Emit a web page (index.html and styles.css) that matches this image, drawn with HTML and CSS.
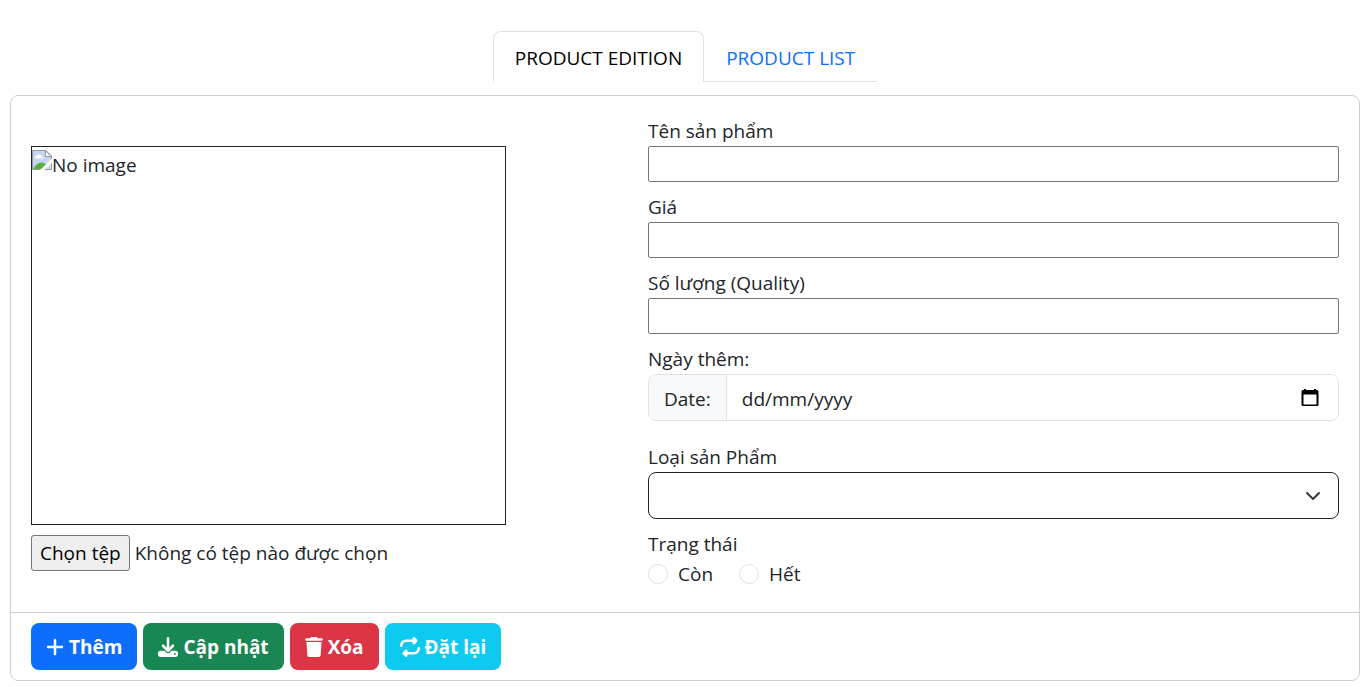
FILE: index.html
```html
<!DOCTYPE html>
<html lang="vi">
<head>
<meta charset="utf-8">
<meta name="viewport" content="width=device-width, initial-scale=1">
<title>Product edition</title>
<link rel="stylesheet" href="styles.css">
</head>
<body>
<nav class="tabs">
  <a class="tab tab-active" href="#edition" aria-current="page">PRODUCT EDITION</a>
  <a class="tab" href="#list">PRODUCT LIST</a>
</nav>
<form class="card" id="edition">
  <div class="card-body">
    <div class="media">
      <div class="preview">
        <svg class="broken" viewBox="0 0 20 20" role="img" aria-label="No image">
          <path d="M0 .5h14l5.500 5.500V20H0z" fill="#c6d7f5"/>
          <path d="M3 7.500a2 2 0 0 1 2-2 3 3 0 0 1 5 1 1.500 1.500 0 0 1 1 2H4z" fill="#fff"/>
          <path d="M1 19.500c2-4 5-7 8.500-7 2.500 0 4 1 5 2.500l-5 4.500z" fill="#5aaf3c"/>
          <path d="M20 8.500v4.500L12.500 20H8z" fill="#fff"/>
          <path d="M8 19.500H.5V.5H14l5.500 5.500v3M19.500 13.500v6h-6.500" fill="none" stroke="#9a9a9a"/>
          <path d="M13.500 1v5.500H19z" fill="#fff" stroke="#9a9a9a"/>
        </svg>
        <span>No image</span>
      </div>
      <div class="file">
        <input class="file-input" type="file" id="photo">
        <label class="file-button" for="photo">Chọn tệp</label>
        <span>Không có tệp nào được chọn</span>
      </div>
    </div>
    <div class="fields">
      <div class="field">
        <label for="name">Tên sản phẩm</label>
        <input class="text" id="name" type="text">
      </div>
      <div class="field">
        <label for="price">Giá</label>
        <input class="text" id="price" type="text">
      </div>
      <div class="field">
        <label for="quantity">Số lượng (Quality)</label>
        <input class="text" id="quantity" type="text">
      </div>
      <div class="field field-date">
        <label for="date">Ngày thêm:</label>
        <div class="group">
          <span class="addon">Date:</span>
          <input class="date" id="date" type="text" placeholder="dd/mm/yyyy">
          <button class="picker" type="button" aria-label="Calendar">
            <svg class="calendar" viewBox="0 0 20 20"><path fill-rule="evenodd" d="M4 1h2v1h8V1h2v1h1a1.500 1.500 0 0 1 1.500 1.500v13A1.500 1.500 0 0 1 17 18H3a1.500 1.500 0 0 1-1.500-1.500v-13A1.500 1.500 0 0 1 3 2h1zM3.500 6.500v10h13v-10z"/></svg>
          </button>
        </div>
      </div>
      <div class="field">
        <label for="category">Loại sản Phẩm</label>
        <div class="select-wrap">
          <select class="select" id="category"><option></option></select>
          <svg class="chevron" viewBox="0 0 16 16"><path d="m2 5 6 6 6-6" fill="none" stroke="#343a40" stroke-width="2" stroke-linecap="round" stroke-linejoin="round"/></svg>
        </div>
      </div>
      <fieldset class="status">
        <legend>Trạng thái</legend>
        <div class="options">
          <label class="option"><input class="radio" type="radio" name="status">Còn</label>
          <label class="option"><input class="radio" type="radio" name="status">Hết</label>
        </div>
      </fieldset>
    </div>
  </div>
  <div class="card-footer">
    <button class="btn btn-add" type="button"><svg class="icon icon-narrow" viewBox="0 0 448 512"><path d="M256 80c0-17.700-14.300-32-32-32s-32 14.300-32 32V224H48c-17.700 0-32 14.300-32 32s14.300 32 32 32H192V432c0 17.700 14.300 32 32 32s32-14.300 32-32V288H400c17.700 0 32-14.300 32-32s-14.300-32-32-32H256V80z"/></svg>Thêm</button>
    <button class="btn btn-update" type="button"><svg class="icon" viewBox="0 0 512 512"><path d="M288 32c0-17.700-14.300-32-32-32s-32 14.300-32 32V274.700l-73.400-73.400c-12.500-12.500-32.800-12.500-45.300 0s-12.500 32.800 0 45.300l128 128c12.500 12.500 32.800 12.500 45.300 0l128-128c12.500-12.500 12.500-32.800 0-45.300s-32.800-12.500-45.300 0L288 274.700V32zM64 352c-35.300 0-64 28.700-64 64v32c0 35.300 28.700 64 64 64H448c35.300 0 64-28.700 64-64V416c0-35.300-28.700-64-64-64H346.500l-45.300 45.300c-25 25-65.500 25-90.500 0L165.500 352H64zm368 56a24 24 0 1 1 0 48 24 24 0 1 1 0-48z"/></svg>Cập nhật</button>
    <button class="btn btn-delete" type="button"><svg class="icon icon-narrow" viewBox="0 0 448 512"><path d="M135.200 17.700L128 32H32C14.300 32 0 46.300 0 64S14.300 96 32 96H416c17.700 0 32-14.300 32-32s-14.300-32-32-32H320l-7.200-14.300C307.400 6.800 296.300 0 284.200 0H163.800c-12.100 0-23.200 6.800-28.600 17.700zM416 128H32L53.200 467c1.600 25.300 22.600 45 47.900 45H346.900c25.300 0 46.300-19.700 47.900-45L416 128z"/></svg>Xóa</button>
    <button class="btn btn-reset" type="reset"><svg class="icon" viewBox="0 0 512 512"><path d="M0 224c0 17.700 14.300 32 32 32s32-14.300 32-32c0-53 43-96 96-96H320v32c0 12.900 7.800 24.600 19.800 29.600s25.700 2.200 34.900-6.900l64-64c12.500-12.500 12.500-32.800 0-45.300l-64-64c-9.200-9.200-22.900-11.900-34.900-6.900S320 19.100 320 32V64H160C71.600 64 0 135.600 0 224zm512 64c0-17.700-14.300-32-32-32s-32 14.300-32 32c0 53-43 96-96 96H192V352c0-12.900-7.800-24.600-19.800-29.600s-25.700-2.200-34.900 6.900l-64 64c-12.500 12.500-12.500 32.800 0 45.300l64 64c9.200 9.200 22.900 11.900 34.900 6.900s19.800-16.600 19.800-29.600V448H352c88.400 0 160-71.600 160-160z"/></svg>Đặt lại</button>
  </div>
</form>
</body>
</html>
```
FILE: styles.css
```css
* { box-sizing: border-box; }

body {
  margin: 0;
  padding: 31px 7px 6px 10px;
  background: #fff;
  color: #212529;
  font-family: "Open Sans", "Noto Sans", sans-serif;
  font-size: 19px;
  line-height: 30px;
}

input, select, button { font: inherit; color: inherit; }

.tabs {
  display: flex;
  width: fit-content;
  margin: 0 auto 13px;
  border-bottom: 1px solid #dee2e6;
}
.tab {
  margin-bottom: -1px;
  padding: 11px 21px 8px;
  border: 1px solid transparent;
  border-radius: 8px 8px 0 0;
  color: #0d6efd;
  text-decoration: none;
}
.tab-active {
  background: #fff;
  border-color: #dee2e6 #dee2e6 #fff;
  color: #000;
}

.card {
  border: 1px solid #d0d0d0;
  border-radius: 8px;
}
.card-body {
  display: grid;
  grid-template-columns: 617fr 691fr;
  padding: 20px 20px 23px;
}
.media { padding-top: 30px; }
.preview {
  display: flex;
  align-items: flex-start;
  width: 77%;
  height: 379px;
  padding-top: 3px;
  border: 1px solid #212529;
}
.broken { width: 20px; height: 20px; }

.file {
  display: flex;
  align-items: center;
  gap: 5px;
  margin-top: 10px;
}
.file-input {
  position: absolute;
  width: 1px;
  height: 1px;
  opacity: 0;
}
.file-button {
  padding: 2px 8px;
  border: 1px solid #767676;
  border-radius: 3px;
  background: #efefef;
  color: #000;
}

.fields {
  display: flex;
  flex-direction: column;
  gap: 10px;
}
.field { display: flex; flex-direction: column; }
.field-date { margin-bottom: 11px; }
.text {
  width: 100%;
  height: 36px;
  border: 1px solid #767676;
  border-radius: 2px;
  background: #fff;
}
.group {
  display: flex;
  height: 47px;
  border: 1px solid #dee2e6;
  border-radius: 8px;
  overflow: hidden;
}
.addon {
  padding: 9px 15px;
  border-right: 1px solid #dee2e6;
  background: #f8f9fa;
}
.date {
  flex: 1;
  min-width: 0;
  padding: 2px 15px 0;
  border: 0;
  background: #fff;
}
.date::placeholder { color: #212529; opacity: 1; }
.picker {
  display: flex;
  align-items: center;
  padding: 0 18px 0 0;
  border: 0;
  background: #fff;
}
.calendar { width: 20px; height: 20px; fill: #000; }

.select-wrap { display: grid; align-items: center; }
.select {
  grid-area: 1 / 1;
  width: 100%;
  height: 47px;
  padding: 0 15px;
  border: 1px solid #212529;
  border-radius: 8px;
  background: #fff;
  appearance: none;
}
.chevron {
  grid-area: 1 / 1;
  justify-self: end;
  width: 16px;
  height: 16px;
  margin-right: 18px;
  pointer-events: none;
}

.status { margin: 0; padding: 0; border: 0; }
.status legend { padding: 0; }
.options { display: flex; gap: 26px; }
.option { display: flex; align-items: center; gap: 10px; }
.radio {
  width: 20px;
  height: 20px;
  margin: 0;
  border: 1px solid #dee2e6;
  border-radius: 50%;
  background: #fff;
  appearance: none;
}
.radio:checked { border: 6px solid #0d6efd; }

.card-footer {
  display: flex;
  gap: 6px;
  padding: 10px 20px;
  border-top: 1px solid #d0d0d0;
}
.btn {
  display: flex;
  align-items: center;
  gap: 5px;
  height: 47px;
  padding: 0 15px;
  border: 0;
  border-radius: 8px;
  color: #fff;
  font-weight: 700;
}
.btn-add { background: #0d6efd; }
.btn-update { background: #198754; }
.btn-delete { background: #dc3545; }
.btn-reset { background: #0dcaf0; }
.icon { width: 20px; height: 20px; fill: currentColor; }
.icon-narrow { width: 18px; }
```
